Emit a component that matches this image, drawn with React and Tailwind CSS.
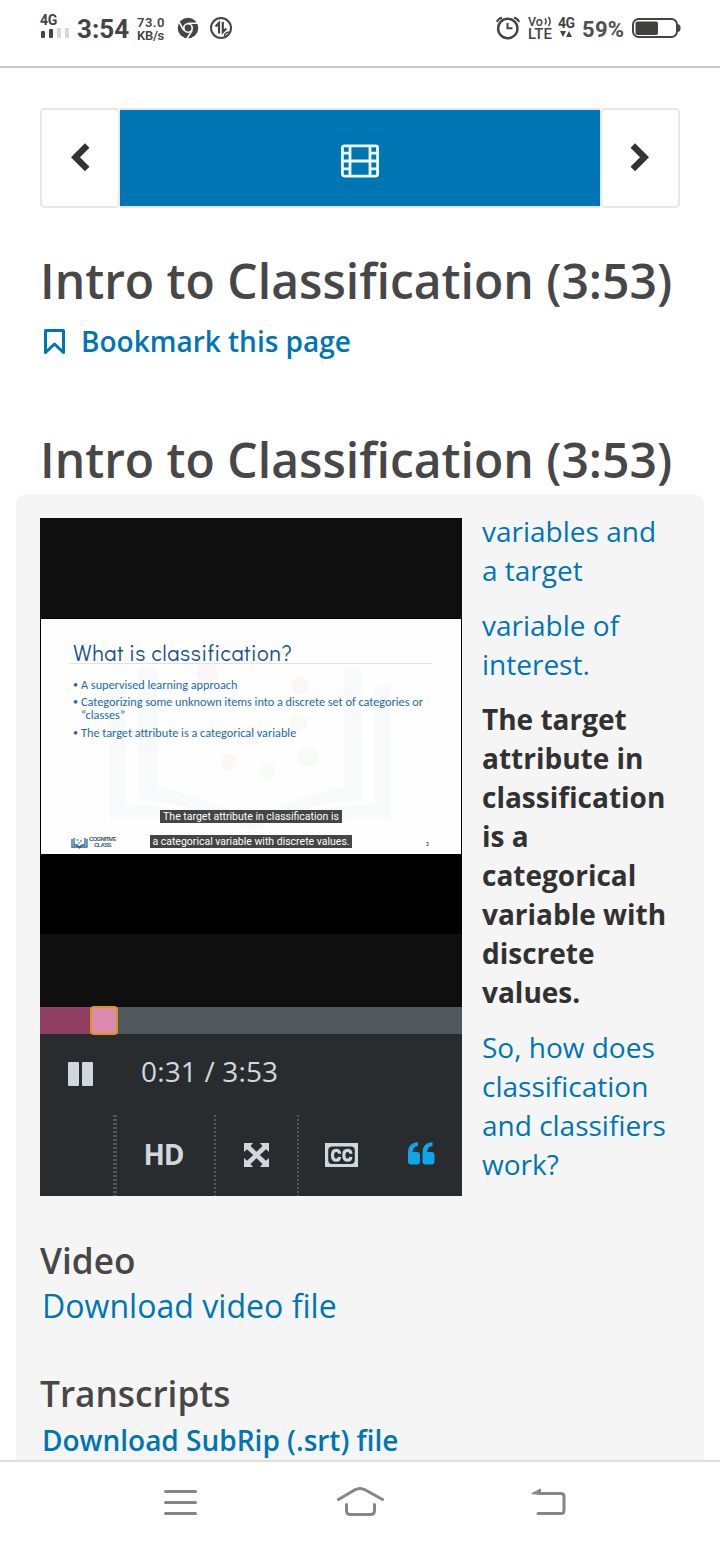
import React from "react";

const Chevron = ({ flip }) => (
  <svg className="h-[32px] w-[20px]" viewBox="0 0 20 32">
    <path d={flip ? "M2.8 3.5 L14.5 15.2 L2.8 26.9" : "M17.2 3.5 L5.5 15.2 L17.2 26.9"} fill="none" stroke="#333" strokeWidth="6.4" />
  </svg>
);

function StatusBar() {
  return (
    <header className="flex h-[68px] shrink-0 items-start border-b-2 border-[#c8c8c8] pl-10 font-[Roboto] text-[#444]">
      <div className="mt-[13px] w-[37px]">
        <div className="h-[15px] text-[14px] leading-[15px] font-bold tracking-[-0.3px]">4G</div>
        <svg className="h-[14px] w-[30px]" viewBox="0 0 30 14">
          <rect x="1" y="3" width="4" height="7" rx="1" fill="#444" />
          <rect x="9" y="1" width="4" height="9" rx="1" fill="#444" />
          <rect x="17" y="-1" width="4" height="11" rx="1" fill="#d8d8d8" />
          <rect x="25" y="-3" width="4" height="13" rx="1" fill="#d8d8d8" />
        </svg>
      </div>
      <div className="mt-[14px] w-[60px] text-[26px] leading-[30px] font-bold whitespace-nowrap">3:54</div>
      <div className="mt-[16px] w-[40px] text-[13px] leading-[13px] font-semibold whitespace-nowrap">
        <div className="tracking-[0.5px]">73.0</div>
        <div className="tracking-[-0.3px]">KB/s</div>
      </div>
      <svg className="mt-[17px] h-[22px] w-[22px]" viewBox="0 0 22 22">
        <circle cx="11" cy="11" r="10.3" fill="#444" />
        <circle cx="11" cy="11" r="4.2" fill="#444" stroke="#fff" strokeWidth="1.6" />
        <path d="M11 6.2H21 M6.8 13.4 L2 5 M15.2 13.4 L10 21.5" stroke="#fff" strokeWidth="1.6" />
      </svg>
      <svg className="mt-[17px] ml-[10px] h-[22px] w-[24px]" viewBox="0 0 24 22">
        <circle cx="12" cy="11" r="10" fill="none" stroke="#444" strokeWidth="2" />
        <path d="M6.5 9.5 L10 6 V16.5 M13.8 5 V15 L17.3 11.5" fill="none" stroke="#444" strokeWidth="2.2" />
        <path d="M15.5 19 Q15.5 15.5 20.5 15" fill="none" stroke="#444" strokeWidth="1.5" />
      </svg>
      <div className="grow" />
      <svg className="mt-[16px] h-[24px] w-[24px]" viewBox="0 0 24 24">
        <circle cx="11.8" cy="12.5" r="9.7" fill="none" stroke="#444" strokeWidth="2.4" />
        <path d="M11.5 7 V12.3 H16.5" fill="none" stroke="#444" strokeWidth="2" />
        <path d="M1 6 Q2 2.5 6 1.8 M23 6 Q22 2.5 18 1.8" fill="none" stroke="#444" strokeWidth="2" />
      </svg>
      <div className="mt-[16px] ml-[8px] w-[30px] font-medium whitespace-nowrap">
        <div className="flex h-[11px] items-center text-[12.5px] leading-[11px]">
          Vo
          <svg className="ml-px h-[11px] w-[8px]" viewBox="0 0 8 11">
            <path d="M1 2.5 Q3.2 5.5 1 8.5 M4.5 1 Q7.7 5.5 4.5 10" fill="none" stroke="#444" strokeWidth="1.5" />
          </svg>
        </div>
        <div className="mt-px h-[13px] text-[15px] leading-[13px]">LTE</div>
      </div>
      <div className="mt-[16px] w-[24px]">
        <div className="h-[14px] text-[14px] leading-[15px] font-bold tracking-[-0.6px]">4G</div>
        <svg className="h-[8px] w-[14px]" viewBox="0 0 14 8">
          <path d="M2 1 H8 L5 7Z M8 7 H14 L11 1Z" fill="#444" />
        </svg>
      </div>
      <div className="mt-[16px] w-[50px] text-[22px] leading-[28px] font-bold tracking-[0.3px] whitespace-nowrap text-[#505050]">59%</div>
      <svg className="mt-[17px] mr-[38px] h-[22px] w-[50px]" viewBox="0 0 50 22">
        <rect x="1" y="2" width="44" height="18" rx="5.5" fill="none" stroke="#444" strokeWidth="2" />
        <rect x="3.5" y="4.5" width="22.5" height="13.5" rx="2" fill="#40403c" />
        <path d="M46 7 Q49 8 48.5 11 Q49 14 46 15Z" fill="#444" />
      </svg>
    </header>
  );
}

function FilmIcon() {
  return (
    <svg className="mt-[5px] h-[34px] w-[38px]" viewBox="0 0 38 34" fill="none" stroke="#f0ffff" strokeWidth="2.8">
      <rect x="1.4" y="1.9" width="35.2" height="30.2" rx="2" />
      <path d="M9 1 V33 M29 1 V33 M9 17 H29 M1 9.2 H9 M1 17 H9 M1 24.8 H9 M29 9.2 H37 M29 17 H37 M29 24.8 H37" />
    </svg>
  );
}

function SequenceNav() {
  return (
    <nav className="mx-10 mt-10 flex h-[100px] shrink-0">
      <button className="flex w-[80px] items-center justify-center rounded-[5px] border-2 border-[#e7e7e7]">
        <Chevron />
      </button>
      <div className="flex w-[480px] items-center justify-center border-y-2 border-[#e7e7e7] bg-[#0075b4]">
        <FilmIcon />
      </div>
      <button className="flex w-[80px] items-center justify-center rounded-[5px] border-2 border-[#e7e7e7]">
        <Chevron flip />
      </button>
    </nav>
  );
}

function Bullet({ children, className }) {
  return (
    <li className={className}>
      <span className="w-[8px] shrink-0 text-[10px]">•</span>
      <span>{children}</span>
    </li>
  );
}

function Slide() {
  return (
    <div className="relative h-[237px] border border-black bg-[#fefefe]">
      <svg className="absolute inset-0 h-[235px] w-[420px] opacity-60" viewBox="0 0 420 235">
        <path d="M69 66 H84 V186 Q150 188 180 201 H235 Q270 188 334 186 V66 H350 V200 H69Z" fill="#f4f6f9" />
        <path d="M98 50 H116 V168 Q165 178 209 202 Q250 178 303 168 V50 H320 V180 Q260 185 209 212 Q155 185 98 180Z" fill="#f3f6fa" />
        <g fill="#fdf1f1"><circle cx="166" cy="54" r="11" /><circle cx="259" cy="66" r="9" /><circle cx="188" cy="143" r="8" /><circle cx="211" cy="116" r="9" /></g>
        <g fill="#f5faee"><circle cx="257" cy="104" r="9" /><circle cx="227" cy="152" r="8" /><circle cx="267" cy="138" r="10" /></g>
      </svg>
      <div className="relative flex h-full flex-col pl-[32px]">
        <h3 className="mt-[21px] h-[23px] font-['Didact_Gothic','Century_Gothic',Lato] text-[22px] leading-[26px] tracking-[0.45px] whitespace-nowrap text-[#17508a]">What is classification?</h3>
        <div className="-ml-[4px] w-[363px] border-t border-[#dde3f0]" />
        <ul className="mt-[13px] font-[Carlito,Lato] text-[12.25px] whitespace-nowrap text-[#1a6bad]">
          <Bullet className="flex h-[18px] leading-[16px]">A supervised learning approach</Bullet>
          <Bullet className="flex h-[30px] leading-[13px]">Categorizing some unknown items into a discrete set of categories or<br />“classes”</Bullet>
          <Bullet className="flex h-[18px] leading-[16px]">The target attribute is a categorical variable</Bullet>
        </ul>
      </div>
      <div className="absolute top-[191px] left-0 flex w-full flex-col items-center gap-[12px] font-[Roboto] text-[10.5px] leading-[13px] whitespace-nowrap text-white">
        <span className="flex h-[13px] w-[182px] justify-center bg-[#454545]">The target attribute in classification is</span>
        <span className="flex h-[13px] w-[202px] justify-center bg-[#454545]">a categorical variable with discrete values.</span>
      </div>
      <div className="absolute top-[218px] left-[30px] flex gap-[1px]">
        <svg className="h-[13px] w-[17px]" viewBox="0 0 17 13">
          <path d="M1 2 V10 H7 L8.5 11 L10 10 H16 V2 M3 1 V8 H6 L8.5 10 L11 8 H14 V1" fill="none" stroke="#24659a" strokeWidth="1.3" />
          <circle cx="6.5" cy="3" r="1.2" fill="#84b9a0" /><circle cx="10" cy="4" r="1.2" fill="#d19d65" /><circle cx="8" cy="6" r="1" fill="#70a7d0" />
        </svg>
        <div className="text-center font-['Liberation_Sans'] text-[6px] leading-[5.5px] font-bold tracking-[-0.7px] text-[#42566f]">COGNITIVE<br />CLASS</div>
      </div>
      <div className="absolute top-[222px] left-[385px] font-[Lato] text-[5px] leading-[6px] text-black">2</div>
    </div>
  );
}

function VideoPlayer() {
  return (
    <div className="h-[678px] w-[422px] shrink-0 bg-[#282c2e]">
      <div className="h-[100px] bg-[#0f0f0f]" />
      <Slide />
      <div className="h-[79px] bg-black" />
      <div className="h-[73px] bg-[#0f0f0f]" />
      <div className="flex h-[27px] bg-[#4f595d]">
        <div className="w-[50px] bg-[#8e3e63]" />
        <div className="-mt-px h-[29px] w-[28px] rounded-[4px] border-2 border-[#dd9516] bg-[#db8bb0]" />
      </div>
      <div className="flex h-[81px] items-center pl-[28px] text-[#cfd8dc]">
        <svg className="-mt-[2px] h-[24px] w-[25px]" viewBox="0 0 25 24" fill="#cfd8dc">
          <rect width="11" height="24" rx="1" /><rect x="14" width="11" height="24" rx="1" />
        </svg>
        <div className="-mt-[8px] ml-[48px] text-[28px] leading-[40px] font-medium tracking-[0.15px] whitespace-nowrap">0:31 / 3:53</div>
      </div>
      <div className="flex h-[81px] text-[#cfd8dc]">
        <div className="w-[73px]" />
        <div className="w-[4px] bg-[repeating-linear-gradient(to_bottom,#51595c_0px,#51595c_2px,transparent_2px,transparent_4px)]" />
        <div className="flex w-[97px] items-center justify-center pr-[4px] pb-[4px] text-[28px] font-bold tracking-[-1.2px]">HD</div>
        <div className="w-[2px] bg-[repeating-linear-gradient(to_bottom,#51595c_0px,#51595c_2px,transparent_2px,transparent_4px)]" />
        <div className="flex w-[81px] items-center justify-center pb-[2px]">
          <svg className="h-[24px] w-[25px]" viewBox="0 0 25 24" fill="#cfd8dc">
            <path d="M0 0H9L6.5 3L12.5 8.8L18.5 3L16 0H25V9L22 6.3L15.8 12L22 17.7L25 15V24H16L18.5 21L12.5 15.2L6.5 21L9 24H0V15L3 17.7L9.2 12L3 6.3L0 9Z" />
          </svg>
        </div>
        <div className="w-[2px] bg-[repeating-linear-gradient(to_bottom,#51595c_0px,#51595c_2px,transparent_2px,transparent_4px)]" />
        <div className="flex w-[84px] items-center justify-center pb-[2px] pl-[1px]">
          <svg className="h-[24px] w-[33px]" viewBox="0 0 33 24">
            <rect width="33" height="24" fill="#cfd8dc" />
            <rect x="3.2" y="3.5" width="26.6" height="17.5" rx="4" fill="#282c2e" />
            <path d="M14.5 10.8 V10 Q14 7.4 11.3 7.4 Q7.5 7.4 7.5 12.2 Q7.5 17.2 11.3 17.2 Q14.3 17.2 14.5 13.8 M25.8 10.8 V10 Q25.3 7.4 22.6 7.4 Q18.8 7.4 18.8 12.2 Q18.8 17.2 22.6 17.2 Q25.6 17.2 25.8 13.8" fill="none" stroke="#cfd8dc" strokeWidth="3.2" />
          </svg>
        </div>
        <div className="flex w-[79px] items-center justify-center pr-[3px] pb-[4px]">
          <svg className="h-[23px] w-[27px]" viewBox="0 0 27 23" fill="#0ea5e9">
            <path d="M10 0 V4 Q5 4.5 4.5 10 H9 Q12 10 12 13 V19 Q12 22.5 9 22.5 H3 Q0 22.5 0 19 V10 Q0 1 10 0Z" />
            <path d="M24.5 0 V4 Q19.5 4.5 19 10 H23.5 Q26.5 10 26.5 13 V19 Q26.5 22.5 23.5 22.5 H17.5 Q14.5 22.5 14.5 19 V10 Q14.5 1 24.5 0Z" />
          </svg>
        </div>
      </div>
    </div>
  );
}

function Cue({ active, lines }) {
  return (
    <p className={active ? "mb-4 font-bold text-[#313131]" : "mb-4 text-[#0075b4]"}>
      {lines.map((line) => <span key={line} className="block">{line}</span>)}
    </p>
  );
}

export default function App() {
  return (
    <div className="flex h-[1544px] w-[720px] flex-col overflow-hidden bg-white font-['Open_Sans',sans-serif]">
      <StatusBar />
      <main className="flex h-[1392px] shrink-0 flex-col overflow-hidden">
        <SequenceNav />
        <h1 className="mt-[43px] ml-10 h-[60px] shrink-0 text-[48px] leading-[60px] font-semibold whitespace-nowrap text-[#474747]">Intro to Classification (3:53)</h1>
        <div className="mt-[10px] ml-[44px] flex h-[40px] shrink-0 items-center text-[#0075b4]">
          <svg className="mt-[2px] h-[26px] w-[21px]" viewBox="0 0 21 26">
            <path d="M1.5 1.5 H19.5 V23.5 L10.5 15 L1.5 23.5Z" fill="none" stroke="#0075b4" strokeWidth="3" strokeLinejoin="round" />
          </svg>
          <span className="ml-[16px] text-[28px] leading-[40px] font-semibold whitespace-nowrap">Bookmark this page</span>
        </div>
        <h2 className="mt-[69px] ml-10 h-[60px] shrink-0 text-[48px] leading-[60px] font-semibold whitespace-nowrap text-[#474747]">Intro to Classification (3:53)</h2>
        <section className="mx-4 mt-[4px] h-[980px] shrink-0 rounded-[10px] bg-[#f5f5f5] px-6 pt-6">
          <div className="flex gap-[20px]">
            <VideoPlayer />
            <div className="-mt-[6px] h-[684px] text-[28px] leading-[39px] whitespace-nowrap">
              <Cue lines={["variables and", "a target"]} />
              <Cue lines={["variable of", "interest."]} />
              <Cue active lines={["The target", "attribute in", "classification", "is a", "categorical", "variable with", "discrete", "values."]} />
              <Cue lines={["So, how does", "classification", "and classifiers", "work?"]} />
            </div>
          </div>
          <h3 className="mt-[40px] h-[48px] text-[35.2px] leading-[48px] font-semibold text-[#474747]">Video</h3>
          <div className="ml-[2px] h-[44px] text-[32.1px] leading-[44px] whitespace-nowrap text-[#0075b4]">Download video file</div>
          <h3 className="mt-[41px] h-[48px] text-[35.2px] leading-[48px] font-semibold text-[#474747]">Transcripts</h3>
          <div className="ml-[2px] h-[44px] text-[28px] leading-[47px] font-semibold whitespace-nowrap text-[#0075b4]">Download SubRip (.srt) file</div>
        </section>
      </main>
      <footer className="flex h-[84px] shrink-0 items-start border-t-2 border-[#dfdfdf] bg-white pl-[163px]">
        <svg className="mt-[24px] h-[32px] w-[35px]" viewBox="0 0 35 32" stroke="#868686" strokeWidth="3" strokeLinecap="round">
          <path d="M2.5 5.5 H32.5 M2.5 16.5 H32.5 M2.5 27.5 H32.5" />
        </svg>
        <svg className="mt-[24px] ml-[136px] h-[32px] w-[50px]" viewBox="0 0 50 32" fill="none" stroke="#868686" strokeWidth="3" strokeLinecap="round" strokeLinejoin="round">
          <path d="M4.5 13.5 L21 3.8 Q26 1 31 3.8 L48.5 13.5 M12.5 18.5 V24.5 Q12.5 28.5 16.5 28.5 H36.5 Q40.5 28.5 40.5 24.5 V18.5" />
        </svg>
        <svg className="mt-[24px] ml-[147px] h-[32px] w-[36px]" viewBox="0 0 36 32" fill="none" stroke="#868686" strokeWidth="3" strokeLinecap="round">
          <path d="M8 7.5 H30 Q33 7.5 33 10.5 V24.5 Q33 27.5 30 27.5 H7" />
          <path d="M1 7.5 L9.5 3 V8Z" fill="#868686" strokeWidth="1" />
        </svg>
      </footer>
    </div>
  );
}
